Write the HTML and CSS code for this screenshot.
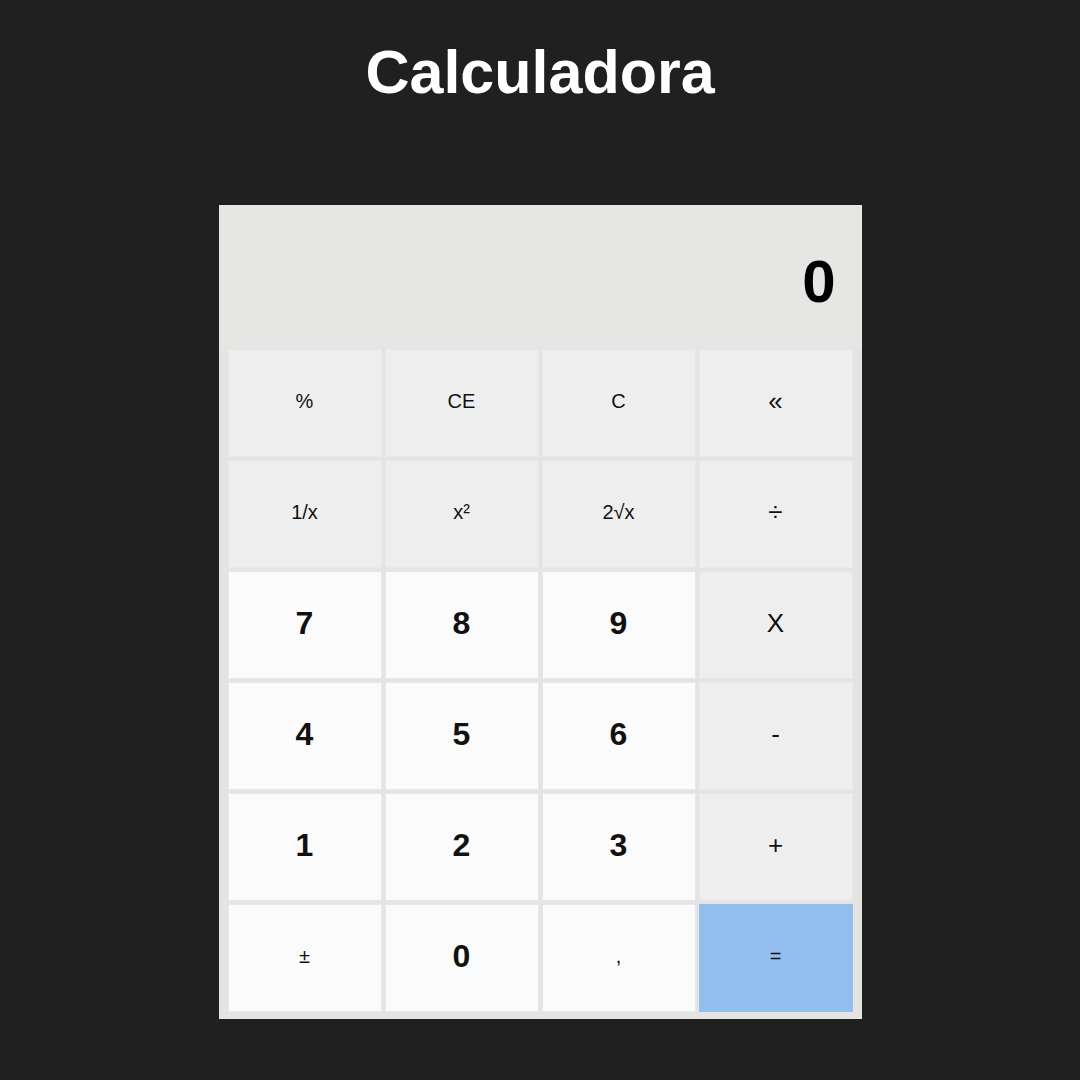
FILE: index.html
```html
<!DOCTYPE html>
<html lang="pt">
<head>
<meta charset="utf-8">
<title>Calculadora</title>
<link rel="stylesheet" href="styles.css">
</head>
<body>
<h1 class="title">Calculadora</h1>
<div class="calc">
  <div class="display">0</div>
  <div class="keys">
    <button class="key fn">%</button>
    <button class="key fn">CE</button>
    <button class="key fn">C</button>
    <button class="key fn big">&laquo;</button>
    <button class="key fn">1/x</button>
    <button class="key fn">x&sup2;</button>
    <button class="key fn">2&radic;x</button>
    <button class="key fn big">&divide;</button>
    <button class="key num">7</button>
    <button class="key num">8</button>
    <button class="key num">9</button>
    <button class="key fn big">X</button>
    <button class="key num">4</button>
    <button class="key num">5</button>
    <button class="key num">6</button>
    <button class="key fn big">-</button>
    <button class="key num">1</button>
    <button class="key num">2</button>
    <button class="key num">3</button>
    <button class="key fn big">+</button>
    <button class="key numlight">&plusmn;</button>
    <button class="key num">0</button>
    <button class="key numlight">,</button>
    <button class="key eq">=</button>
  </div>
</div>
</body>
</html>
```
FILE: styles.css
```css
body {
  margin: 0;
  background: #202020;
  font-family: "Liberation Sans", Arial, sans-serif;
}
.title {
  margin: 38px 0 0;
  height: 167px;
  text-align: center;
  color: #ffffff;
  font-size: 61px;
  font-weight: bold;
  line-height: 69px;
}
.calc {
  width: 643px;
  margin: 0 auto;
  background: #e4e4e2;
}
.display {
  height: 143px;
  box-sizing: border-box;
  padding: 10px 26px 0 0;
  display: flex;
  align-items: center;
  justify-content: flex-end;
  font-size: 60px;
  font-weight: bold;
  color: #000;
  background: #e6e6e4;
}
.keys {
  display: grid;
  grid-template-columns: repeat(4, 154px);
  grid-auto-rows: 108px;
  gap: 3px;
  padding: 1px 9px 7px;
}
.key {
  border: 1px solid #e8e8e8;
  margin: 0;
  padding: 0 0 3px;
  font-family: "Liberation Sans", Arial, sans-serif;
  color: #111;
  font-size: 20px;
  cursor: pointer;
}
.fn {
  background: #eeeeee;
}
.fn.big {
  font-size: 26px;
}
.num {
  background: #fbfbfb;
  font-size: 32px;
  font-weight: bold;
}
.numlight {
  background: #fbfbfb;
  font-size: 20px;
}
.eq {
  background: #92bfee;
  border-color: #92bfee;
  font-size: 20px;
}
```
